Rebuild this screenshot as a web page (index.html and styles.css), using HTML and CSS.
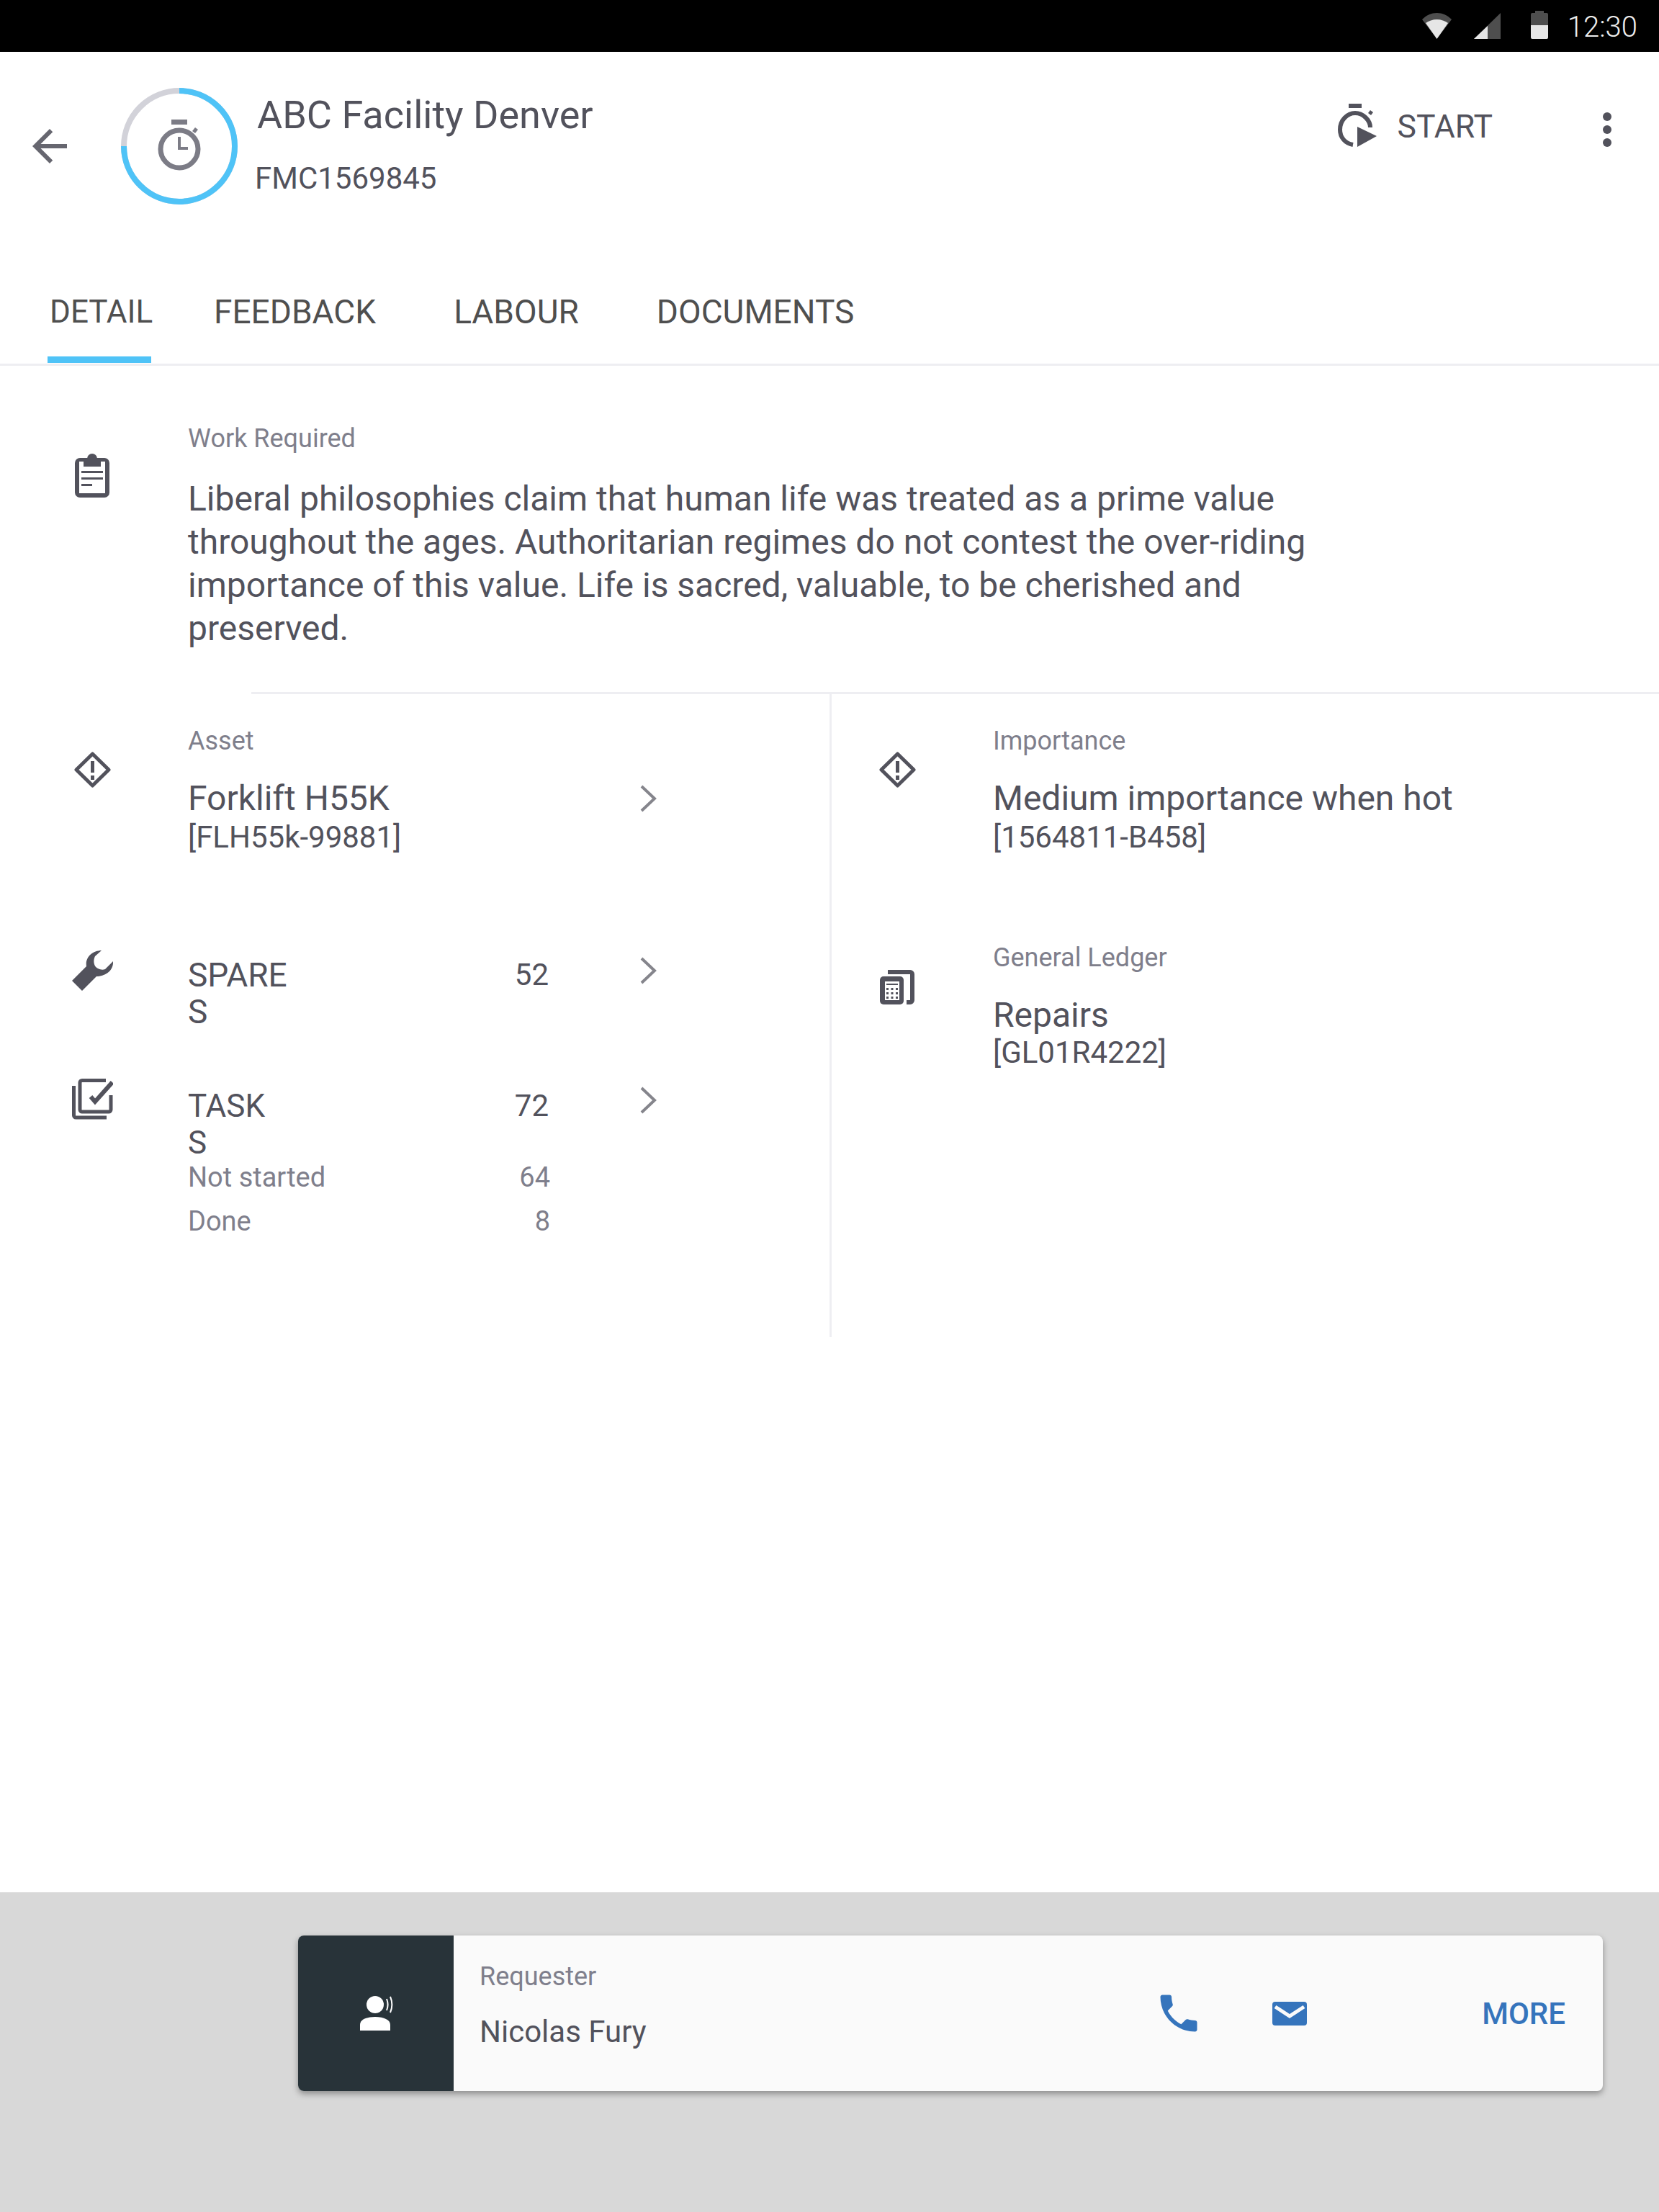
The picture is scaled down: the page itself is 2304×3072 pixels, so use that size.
FILE: index.html
```html
<!DOCTYPE html>
<html lang="en">
<head>
  <meta charset="UTF-8" />
  <title>ABC Facility Denver</title>
  <link rel="stylesheet" href="styles.css">
</head>
<body>

  <div class="status-bar">
    <svg class="st-wifi" width="41" height="36" viewBox="0 0 41 36"><path d="M0 9C6 3 13 0 20.500 0S35 3 41 9L20.500 36Z" fill="#4e4e4e"/><path d="M5 14C9 11 15 9 20.500 9S32 11 36 14L20.500 36Z" fill="#e6e6e6"/></svg>
    <svg class="st-signal" width="37" height="36" viewBox="0 0 37 36"><path d="M37 0V36H0Z" fill="#4e4e4e"/><path d="M19 18V36H0Z" fill="#e6e6e6"/></svg>
    <svg class="st-battery" width="24" height="39" viewBox="0 0 24 39"><path d="M6 0H18V3H22A2 2 0 0 1 24 5V20H0V5A2 2 0 0 1 2 3H6Z" fill="#4e4e4e"/><path d="M0 20H24V37A2 2 0 0 1 22 39H2A2 2 0 0 1 0 37Z" fill="#e6e6e6"/></svg>
    <span class="st-time">12:30</span>
  </div>

  <header class="top">
    <svg class="back" width="72" height="72" viewBox="0 0 24 24"><path d="M20 11H7.830l5.590-5.590L12 4l-8 8 8 8 1.410-1.410L7.830 13H20v-2z" fill="#66666f"/></svg>
    <div class="ring">
      <svg width="162" height="162" viewBox="0 0 162 162">
        <circle cx="81" cy="81" r="77" fill="none" stroke="#d2d2d9" stroke-width="8"/>
        <circle cx="81" cy="81" r="77" fill="none" stroke="#4fc3f7" stroke-width="8" pathLength="100" stroke-dasharray="75 25" transform="rotate(-90 81 81)"/>
        <g fill="#7c7c86">
          <rect x="70" y="44" width="22" height="7"/>
          <path d="M99 60l4-5 4 3-4 5z"/>
        </g>
        <circle cx="81" cy="85" r="26" fill="none" stroke="#7c7c86" stroke-width="7"/>
        <path d="M81 68V84H93" fill="none" stroke="#7c7c86" stroke-width="4"/>
      </svg>
    </div>
    <div class="top-titles">
      <h1>ABC Facility Denver</h1>
      <p>FMC1569845</p>
    </div>
    <div class="start">
      <svg width="54" height="60" viewBox="0 0 54 60"><g fill="#52525c"><rect x="15" y="0" width="18" height="6"/><path d="M42 13l3-4 4 3-3 4z"/><path d="M27 32L54 45 27 60Z"/></g><path d="M21 57C10 55 3 47 3 36C3 23 13 13 24 13S45 23 45 33" fill="none" stroke="#52525c" stroke-width="6"/></svg>
      <span>START</span>
    </div>
    <div class="dots"><i></i><i></i><i></i></div>
  </header>

  <nav class="tabs">
    <a class="tab active">DETAIL</a>
    <a class="tab">FEEDBACK</a>
    <a class="tab">LABOUR</a>
    <a class="tab">DOCUMENTS</a>
  </nav>

  <main class="detail">
    <section class="row work">
      <div class="ic">
        <svg width="48" height="61" viewBox="0 0 48 61"><rect y="6" width="48" height="55" rx="7" fill="#52525c"/><rect x="6" y="11" width="36" height="44" fill="#fff"/><circle cx="24" cy="7" r="7" fill="#52525c"/><rect x="12" y="6" width="24" height="12" fill="#52525c"/><path d="M9 25.500H39M9 34.500H39M9 43.500H24" stroke="#52525c" stroke-width="3"/></svg>
      </div>
      <div class="txt">
        <div class="lbl">Work Required</div>
        <p class="body-text">Liberal philosophies claim that human life was treated as a prime value throughout the ages. Authoritarian regimes do not contest the over-riding importance of this value. Life is sacred, valuable, to be cherished and preserved.</p>
      </div>
    </section>

    <div class="split">
      <div class="col col-left">
        <div class="row asset">
          <div class="ic"><svg width="51" height="50" viewBox="0 0 51 50"><path d="M25.500 3L48 25 25.500 47 3 25Z" fill="none" stroke="#52525c" stroke-width="5" stroke-linejoin="round"/><path d="M23 13H28V29H23ZM23 33H28V39H23Z" fill="#52525c"/></svg></div>
          <div class="txt grow">
            <div class="lbl">Asset</div>
            <div class="big">Forklift H55K</div>
            <div class="sub">[FLH55k-99881]</div>
          </div>
          <svg class="chev" width="24" height="38" viewBox="0 0 24 38"><path d="M2 2L20 19 2 36" fill="none" stroke="#85858c" stroke-width="4"/></svg>
        </div>

        <div class="row spares">
          <div class="ic"><svg width="57" height="57" viewBox="0 0 57 57"><path d="M0 42L20 22C18 10 28 0 41 0L32 8C29 14 30 22 36 25C40 27 43 27 46 26L57 15C58 28 46 36 34 36L14 56Z" fill="#52525c"/></svg></div>
          <div class="txt grow">
            <div class="count-row"><span class="big2">SPARE<br>S</span><span class="num">52</span></div>
          </div>
          <svg class="chev" width="24" height="38" viewBox="0 0 24 38"><path d="M2 2L20 19 2 36" fill="none" stroke="#85858c" stroke-width="4"/></svg>
        </div>

        <div class="row tasks">
          <div class="ic"><svg width="57" height="58" viewBox="0 0 57 58"><path d="M2.500 11V52A3 3 0 0 0 5.500 55H48" fill="none" stroke="#52525c" stroke-width="5"/><path d="M47 3.500H14A3 3 0 0 0 11 6.500V44A3 3 0 0 0 14 47H51A3 3 0 0 0 54 44V24" fill="none" stroke="#52525c" stroke-width="5"/><path d="M26 26L32 33 56 6" fill="none" stroke="#52525c" stroke-width="6"/></svg></div>
          <div class="txt grow">
            <div class="count-row"><span class="big2">TASK<br>S</span><span class="num">72</span></div>
            <div class="count-row small"><span>Not started</span><span>64</span></div>
            <div class="count-row small"><span>Done</span><span>8</span></div>
          </div>
          <svg class="chev" width="24" height="38" viewBox="0 0 24 38"><path d="M2 2L20 19 2 36" fill="none" stroke="#85858c" stroke-width="4"/></svg>
        </div>
      </div>

      <div class="col col-right">
        <div class="row asset">
          <div class="ic"><svg width="51" height="50" viewBox="0 0 51 50"><path d="M25.500 3L48 25 25.500 47 3 25Z" fill="none" stroke="#52525c" stroke-width="5" stroke-linejoin="round"/><path d="M23 13H28V29H23ZM23 33H28V39H23Z" fill="#52525c"/></svg></div>
          <div class="txt grow">
            <div class="lbl">Importance</div>
            <div class="big">Medium importance when hot</div>
            <div class="sub">[1564811-B458]</div>
          </div>
        </div>
        <div class="row ledger">
          <div class="ic"><svg width="48" height="48" viewBox="0 0 48 48"><path d="M11 3H42A3 3 0 0 1 45 6V42A3 3 0 0 1 42 45H37" fill="none" stroke="#52525c" stroke-width="6"/><rect y="9" width="33" height="39" rx="5" fill="#52525c"/><rect x="7" y="16" width="20" height="26" fill="#fff"/><path d="M9 19H25V21H9ZM9 25H12V28H9ZM15.500 25H18.500V28H15.500ZM22 25H25V28H22ZM9 31H12V34H9ZM15.500 31H18.500V34H15.500ZM22 31H25V34H22ZM9 37H12V40H9ZM15.500 37H18.500V40H15.500ZM22 37H25V40H22Z" fill="#52525c"/></svg></div>
          <div class="txt grow">
            <div class="lbl">General Ledger</div>
            <div class="big">Repairs</div>
            <div class="sub">[GL01R4222]</div>
          </div>
        </div>
      </div>
    </div>
  </main>

  <footer class="contact-bar">
    <div class="card">
      <div class="card-side">
        <svg width="48" height="48" viewBox="0 0 48 48"><circle cx="22" cy="12" r="12" fill="#fff"/><path d="M1 48V40C1 33 10 29 22 29S43 33 43 40V48Z" fill="#fff"/><path d="M38 4C40 9 40 15 38 20M43 1C46 8 46 16 43 23" fill="none" stroke="#fff" stroke-width="2"/></svg>
      </div>
      <div class="card-main">
        <div class="lbl">Requester</div>
        <div class="name">Nicolas Fury</div>
      </div>
      <svg class="phone" width="68" height="68" viewBox="0 0 24 24"><path d="M6.620 10.790c1.440 2.830 3.760 5.140 6.590 6.590l2.200-2.200c.27-.27.67-.36 1.020-.24 1.120.37 2.330.57 3.570.57.55 0 1 .45 1 1V20c0 .55-.45 1-1 1-9.390 0-17-7.610-17-17 0-.55.45-1 1-1h3.500c.55 0 1 .45 1 1 0 1.250.2 2.450.57 3.570.11.35.03.74-.25 1.020l-2.200 2.200z" fill="#3574bc"/></svg>
      <svg class="mail" width="48" height="33" viewBox="0 0 48 33"><rect width="48" height="33" rx="4" fill="#3574bc"/><path d="M4 7L24 20 44 7" fill="none" stroke="#fafafa" stroke-width="5"/></svg>
      <a class="more">MORE</a>
    </div>
  </footer>

</body>
</html>
```

FILE: styles.css
```css
* { box-sizing: border-box; font-family: Roboto, sans-serif; }
body { margin: 0; background: #fff; color: #52525c; min-height: 100vh; display: flex; flex-direction: column; }
h1, p { margin: 0; font-weight: 400; }
i { display: block; }

.status-bar {
  height: 72px;
  background: #000;
  display: flex;
  align-items: flex-start;
  justify-content: flex-end;
  padding: 18px 30px 0 0;
}
.st-wifi { margin-right: 31px; }
.st-signal { margin-right: 42px; }
.st-battery { margin: -3px 27px 0 0; }
.st-time { font-size: 40px; font-weight: 300; color: #eee; line-height: 40px; }

.top {
  height: 323px;
  display: flex;
  align-items: flex-start;
  padding: 50px 66px 0 33px;
}
.back { margin-top: 45px; }
.ring { margin-left: 63px; line-height: 0; }
.top-titles { margin-left: 24px; flex: 1; }
.top-titles h1 { font-size: 54px; line-height: 60px; margin: 8px 0 0 3px; }
.top-titles p { font-size: 42px; line-height: 48px; margin-top: 34px; }
.start { display: flex; align-items: center; margin-top: 22px; }
.start span { font-size: 44.5px; margin: 4px 0 0 28px; }
.dots { margin: 34px 0 0 153px; }
.dots i { width: 12px; height: 12px; border-radius: 50%; background: #52525c; margin-bottom: 6px; }

.tabs {
  display: flex;
  height: 113px;
  padding-left: 66px;
  border-bottom: 3px solid #eeeef2;
}
.tab { font-size: 46px; height: 110px; line-height: 54px; padding-top: 11px; margin-right: 108px; color: #4f4f4f; }
.tab.active { font-size: 44px; border-bottom: 9px solid #4fc3f7; padding: 11px 0 0 3px; width: 144px; margin-right: 87px; height: 109px; }

.detail { flex: 1; }
.row { display: flex; align-items: flex-start; }
.ic { width: 72px; display: flex; justify-content: center; margin-right: 97px; flex: none; }
.lbl { font-size: 36px; line-height: 44px; color: #7f7f8c; }
.grow { flex: 1; }

.work { padding: 79px 0 0 92px; height: 453px; }
.work .ic { margin-top: 43px; }
.body-text { font-size: 48px; line-height: 60px; width: 1580px; margin-top: 32px; }

.split { display: flex; border-top: 3px solid #eeeef2; margin-left: 349px; height: 896px; }
.col-left { width: 803px; margin-left: -349px; padding-left: 92px; }
.col-right { flex: 1; border-left: 3px solid #eeeef2; padding-left: 55px; margin-left: 349px; }

.asset { padding-top: 43px; }
.asset .ic { margin-top: 37px; }
.big { font-size: 48px; line-height: 60px; margin-top: 28px; }
.sub { font-size: 42px; line-height: 48px; }
.chev { margin: 83px -110px 0 0; flex: none; }

.big2 { font-size: 46px; line-height: 51px; }
.tasks .big2 { font-size: 44px; }
.num { font-size: 42px; }
.count-row { display: flex; justify-content: space-between; align-items: flex-start; width: 501px; }
.count-row.small { font-size: 38px; line-height: 61px; color: #7f7f8c; width: 503px; }
.count-row + .count-row.small { margin-top: -8px; }
.count-row.small + .count-row.small { margin-top: 0; }

.spares { margin-top: 142px; }
.spares .ic { margin-top: -9px; }
.tasks { margin-top: 80px; }
.tasks .ic { margin-top: -14px; }
.spares .chev { margin: 0 -110px 0 0; }
.tasks .chev { margin: -2px -110px 0 0; }
.ledger { margin-top: 121px; }
.ledger .ic { margin-top: 39px; }
.ledger .big { margin-top: 28px; }
.ledger .sub { margin-top: -2px; }

.contact-bar {
  height: 444px;
  background: #d8d8d8;
  padding: 60px 0 0 414px;
}
.card {
  width: 1812px;
  height: 216px;
  background: #fafafa;
  border-radius: 8px;
  box-shadow: 0 4px 8px rgba(0,0,0,.35);
  display: flex;
  align-items: center;
  overflow: hidden;
  padding-right: 52px;
}
.card-side { width: 216px; align-self: stretch; background: #283339; display: flex; align-items: center; justify-content: center; padding-left: 2px; }
.card-main { flex: 1; padding-left: 36px; margin-top: -23px; }
.name { font-size: 42px; margin-top: 30px; }
.mail { margin: 0 243px 0 96px; }
.more { font-size: 42px; font-weight: 500; color: #3574bc; }
```
